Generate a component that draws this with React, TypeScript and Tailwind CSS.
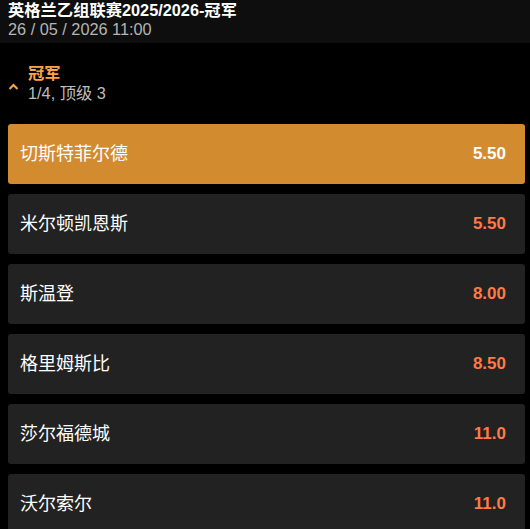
import React from "react";

const rows = [
  { name: "切斯特菲尔德", odds: "5.50", active: true },
  { name: "米尔顿凯恩斯", odds: "5.50" },
  { name: "斯温登", odds: "8.00" },
  { name: "格里姆斯比", odds: "8.50" },
  { name: "莎尔福德城", odds: "11.0" },
  { name: "沃尔索尔", odds: "11.0" },
];

export default function App() {
  return (
    <div
      className="w-[530px] h-[529px] overflow-hidden bg-black"
      style={{ fontFamily: '"Liberation Sans", "Noto Sans CJK SC", sans-serif' }}
    >
      <div className="h-[43px] bg-[#0e0e0e] px-[8px]">
        <div className="text-[16.3px] leading-[18px] font-bold text-white pt-[1px]">英格兰乙组联赛2025/2026-冠军</div>
        <div className="text-[16.3px] leading-[18px] text-[#b5b5b5] mt-[1px]">26 / 05 / 2026 11:00</div>
      </div>
      <div className="flex items-center h-[81px] pl-[8px] pt-[1px] pb-[2px]">
        <svg width="11" height="9" viewBox="0 0 11 9" className="mt-[7px]">
          <path d="M1.5 7 L5.5 3 L9.5 7" fill="none" stroke="#f5a14d" strokeWidth="2.2" />
        </svg>
        <div className="ml-[9px]">
          <div className="text-[16.3px] leading-[19px] font-bold text-[#ffa347]">冠军</div>
          <div className="text-[16.3px] leading-[20px] text-[#bdbdbd]">1/4, 顶级 3</div>
        </div>
      </div>
      <div className="flex flex-col gap-[10px] pl-[8px] pr-[5px]">
        {rows.map((r) => (
          <div
            key={r.name}
            className={`flex items-center justify-between h-[60px] rounded-[3px] pl-[12px] pr-[19px] ${
              r.active ? "bg-[#d38b30]" : "bg-[#222222]"
            }`}
          >
            <span className="text-[18px] text-white">{r.name}</span>
            <span className={`text-[17px] font-bold ${r.active ? "text-white" : "text-[#ff7a45]"}`}>{r.odds}</span>
          </div>
        ))}
      </div>
    </div>
  );
}
